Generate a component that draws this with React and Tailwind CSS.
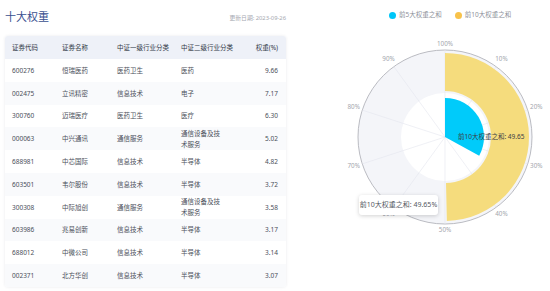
import React from "react";

const rows = [
  ["600276", "恒瑞医药", "医药卫生", "医药", "9.66"],
  ["002475", "立讯精密", "信息技术", "电子", "7.17"],
  ["300760", "迈瑞医疗", "医药卫生", "医疗", "6.30"],
  ["000063", "中兴通讯", "通信服务", "通信设备及技术服务", "5.02"],
  ["688981", "中芯国际", "信息技术", "半导体", "4.82"],
  ["603501", "韦尔股份", "信息技术", "半导体", "3.72"],
  ["300308", "中际旭创", "通信服务", "通信设备及技术服务", "3.58"],
  ["603986", "兆易创新", "信息技术", "半导体", "3.17"],
  ["688012", "中微公司", "信息技术", "半导体", "3.14"],
  ["002371", "北方华创", "信息技术", "半导体", "3.07"],
];

const font = { fontFamily: '"Noto Sans", "Noto Sans CJK SC", sans-serif' };

// polar helpers, angle in degrees clockwise from 12 o'clock
const CX = 159;
const CY = 107;
const pt = (r, a) => {
  const t = (a * Math.PI) / 180;
  return [CX + r * Math.sin(t), CY - r * Math.cos(t)];
};
const ring = (ri, ro, a0, a1) => {
  const large = a1 - a0 > 180 ? 1 : 0;
  const [x0, y0] = pt(ro, a0);
  const [x1, y1] = pt(ro, a1);
  const [x2, y2] = pt(ri, a1);
  const [x3, y3] = pt(ri, a0);
  return `M${x0} ${y0}A${ro} ${ro} 0 ${large} 1 ${x1} ${y1}L${x2} ${y2}A${ri} ${ri} 0 ${large} 0 ${x3} ${y3}Z`;
};
const sector = (r, a0, a1) => {
  const large = a1 - a0 > 180 ? 1 : 0;
  const [x0, y0] = pt(r, a0);
  const [x1, y1] = pt(r, a1);
  return `M${CX} ${CY}L${x0} ${y0}A${r} ${r} 0 ${large} 1 ${x1} ${y1}Z`;
};

const ticks = ["100%", "10%", "20%", "30%", "40%", "50%", "60%", "70%", "80%", "90%"];

function WeightTable() {
  return (
    <div className="w-[281px] ml-[5px]">
      {/* Title */}
      <div className="flex items-end justify-between h-[24px] pt-[8px]">
        <h1 className="text-[11px] leading-[14px] text-[#3a4f8f]">十大权重</h1>
        <span className="text-[5.8px] leading-[10px] text-[#a5a8b0] mb-[1px]">更新日期: 2023-09-26</span>
      </div>

      <div className="mt-[12px] rounded-[3px] overflow-hidden shadow-[0_0_3px_rgba(30,40,80,0.1)]">
        <div className="grid grid-cols-[50px_55px_64px_46px_1fr] items-center h-[23px] pl-[7px] pr-[8px] bg-[#eef1f8] text-[6.5px] text-[#333a48]">
          <span>证券代码</span>
          <span>证券名称</span>
          <span>中证一级行业分类</span>
          <span className="whitespace-nowrap">中证二级行业分类</span>
          <span className="text-right">权重(%)</span>
        </div>
        {rows.map((r, i) => (
          <div
            key={r[0]}
            className={`grid grid-cols-[50px_55px_64px_46px_1fr] items-center h-[22.8px] pl-[7px] pr-[8px] text-[6.5px] leading-[11px] text-[#4a4f5a] ${
              i % 2 === 1 ? "bg-[#f9fafc]" : "bg-white"
            }`}
          >
            <span>{r[0]}</span>
            <span>{r[1]}</span>
            <span>{r[2]}</span>
            <span className="w-[44px]">{r[3]}</span>
            <span className="text-right">{r[4]}</span>
          </div>
        ))}
      </div>
    </div>
  );
}

function PolarChart() {
  const top5 = (32.97 / 100) * 360;
  const top10 = (49.65 / 100) * 360;
  return (
    <div className="relative flex-1">
      {/* Legend */}
      <div className="flex items-center h-[12px] mt-[9px] ml-[103px] text-[6.5px] text-[#8d919a]">
        <span className="w-[7px] h-[7px] rounded-full bg-[#00c6f8]" />
        <span className="ml-[3px]">前5大权重之和</span>
        <span className="w-[7px] h-[7px] rounded-full bg-[#f8c24a] ml-[13px]" />
        <span className="ml-[3px]">前10大权重之和</span>
      </div>

      <svg width="264" height="220" className="block mt-[9px]" style={font}>
        <circle cx={CX} cy={CY} r="87" fill="#f4f5f9" stroke="#a9abb2" strokeWidth="0.8" />
        <circle cx={CX} cy={CY} r="44" fill="#ffffff" />
        {Array.from({ length: 10 }).map((_, i) => {
          const [x, y] = pt(87, i * 36);
          return <line key={i} x1={CX} y1={CY} x2={x} y2={y} stroke="#e4e6ee" strokeWidth="0.6" />;
        })}
        <path d={ring(46, 84, 0, top10)} fill="#f5dc7d" />
        <path d={sector(39, 0, top5)} fill="#00cbfa" />
        {ticks.map((t, i) => {
          const [x, y] = pt(i === 0 || i === 5 ? 93 : 96, i * 36);
          return (
            <text key={t} x={x} y={y} fontSize="6.3" fill="#a3a6ad" textAnchor="middle" dominantBaseline="middle">
              {t}
            </text>
          );
        })}
        <text x="172" y="107.5" fontSize="6.5" fill="#3c3f46" dominantBaseline="middle">
          前10大权重之和: 49.65
        </text>
      </svg>

      {/* Tooltip */}
      <div className="absolute left-[73px] top-[195px] w-[79px] h-[20px] flex items-center justify-center bg-white rounded-[3px] shadow-[0_1px_4px_rgba(0,0,0,0.18)] text-[7px] text-[#555a63] whitespace-nowrap">
        前10大权重之和: 49.65%
      </div>
    </div>
  );
}

export default function App() {
  return (
    <div className="w-[550px] h-[291px] bg-white flex overflow-hidden" style={font}>
      <div className="w-[286px] shrink-0">
        <WeightTable />
      </div>
      <PolarChart />
    </div>
  );
}
